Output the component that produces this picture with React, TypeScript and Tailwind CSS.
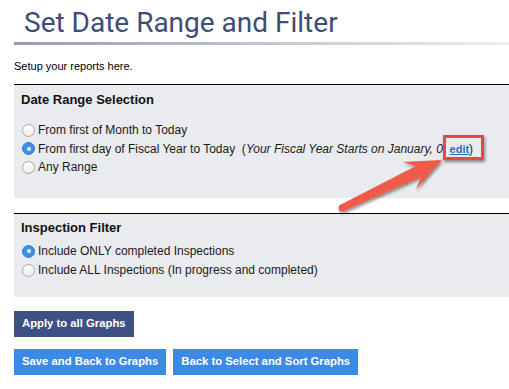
import React from 'react';

const Radio: React.FC<{ checked?: boolean }> = ({ checked }) =>
  checked ? (
    <span className="flex h-[13px] w-[13px] shrink-0 items-center justify-center rounded-full border border-[#2f7fd8] bg-[#3b8de8]">
      <span className="block h-[4px] w-[4px] rounded-full bg-white" />
    </span>
  ) : (
    <span className="block h-[13px] w-[13px] shrink-0 rounded-full border border-[#a9a9a9] bg-gradient-to-b from-[#ffffff] to-[#ededed]" />
  );

const Option: React.FC<{ checked?: boolean; h: string; children: React.ReactNode }> = ({ checked, h, children }) => (
  <div className={`flex items-center ${h}`}>
    <span className="ml-[1px] mr-[3px] block">
      <Radio checked={checked} />
    </span>
    <span className="whitespace-pre text-[12px] leading-[14px] text-[#1a1a1a]">{children}</span>
  </div>
);

const App: React.FC = () => {
  return (
    <div className="relative h-[389px] w-[509px] overflow-hidden bg-white pl-[14px] font-['Liberation_Sans',Arial,sans-serif]">
      <h1 className="pl-[10px] pt-[7px] font-['Roboto',sans-serif] text-[28px] leading-[32px] text-[#3e4d75]">
        Set Date Range and Filter
      </h1>
      <div className="mt-[3px] h-[3px] bg-gradient-to-r from-[#959db4] to-[#eceef2]" />
      <p className="mt-[15px] text-[11px] leading-[13px] text-black">Setup your reports here.</p>

      <section className="mt-[11px] border-t border-black bg-[#e9ebee] pb-[21px] pl-[7px] pt-[7px]">
        <h2 className="text-[13px] font-bold leading-[15px] text-[#111]">Date Range Selection</h2>
        <div className="mt-[14px]">
          <Option h="h-[18.5px]">From first of Month to Today</Option>
          <Option h="h-[18.5px]" checked>
            {'From first day of Fiscal Year to Today  ('}
            <i>Your Fiscal Year Starts on January, 0</i>
            {'  '}
            <a className="text-[11px] font-bold text-[#2a6fc0] underline">edit</a>)
          </Option>
          <Option h="h-[18.5px]">Any Range</Option>
        </div>
      </section>

      <section className="mt-[15px] border-t border-black bg-[#e9ebee] pb-[17px] pl-[7px] pt-[6px]">
        <h2 className="text-[13px] font-bold leading-[15px] text-[#111]">Inspection Filter</h2>
        <div className="mt-[7px]">
          <Option h="h-[19px]" checked>
            Include ONLY completed Inspections
          </Option>
          <Option h="h-[19px]">Include ALL Inspections (In progress and completed)</Option>
        </div>
      </section>

      <button className="mt-[14px] flex h-[26px] items-center bg-[#3e5184] px-[8px] text-[11.3px] font-bold text-white">
        Apply to all Graphs
      </button>
      <div className="mt-[12px] flex gap-[7px]">
        <button className="flex h-[26px] items-center bg-[#3c8ae6] px-[8px] text-[11.3px] font-bold text-white">
          Save and Back to Graphs
        </button>
        <button className="flex h-[26px] items-center bg-[#3c8ae6] px-[8px] text-[11.3px] font-bold text-white">
          Back to Select and Sort Graphs
        </button>
      </div>

      {/* annotation: red box around edit link */}
      <div className="absolute left-[443px] top-[135px] h-[25px] w-[41px] border-[3px] border-[#e8493a] shadow-[1px_2px_3px_rgba(0,0,0,0.45)]" />

      {/* annotation arrow */}
      <svg className="pointer-events-none absolute left-0 top-0" width="509" height="389" viewBox="0 0 509 389">
        <defs>
          <filter id="sh" x="-20%" y="-20%" width="140%" height="140%">
            <feDropShadow dx="1" dy="2" stdDeviation="1.5" floodColor="#000" floodOpacity="0.45" />
          </filter>
        </defs>
        <g filter="url(#sh)" fill="#ef5a48">
          <polygon points="442,160 403.1,162.1 416,165.9 340.5,204.8 343.5,211.2 421.2,176.7 416.1,189.1" />
          <circle cx="342" cy="208" r="3.5" />
        </g>
      </svg>
    </div>
  );
};

export default App;
